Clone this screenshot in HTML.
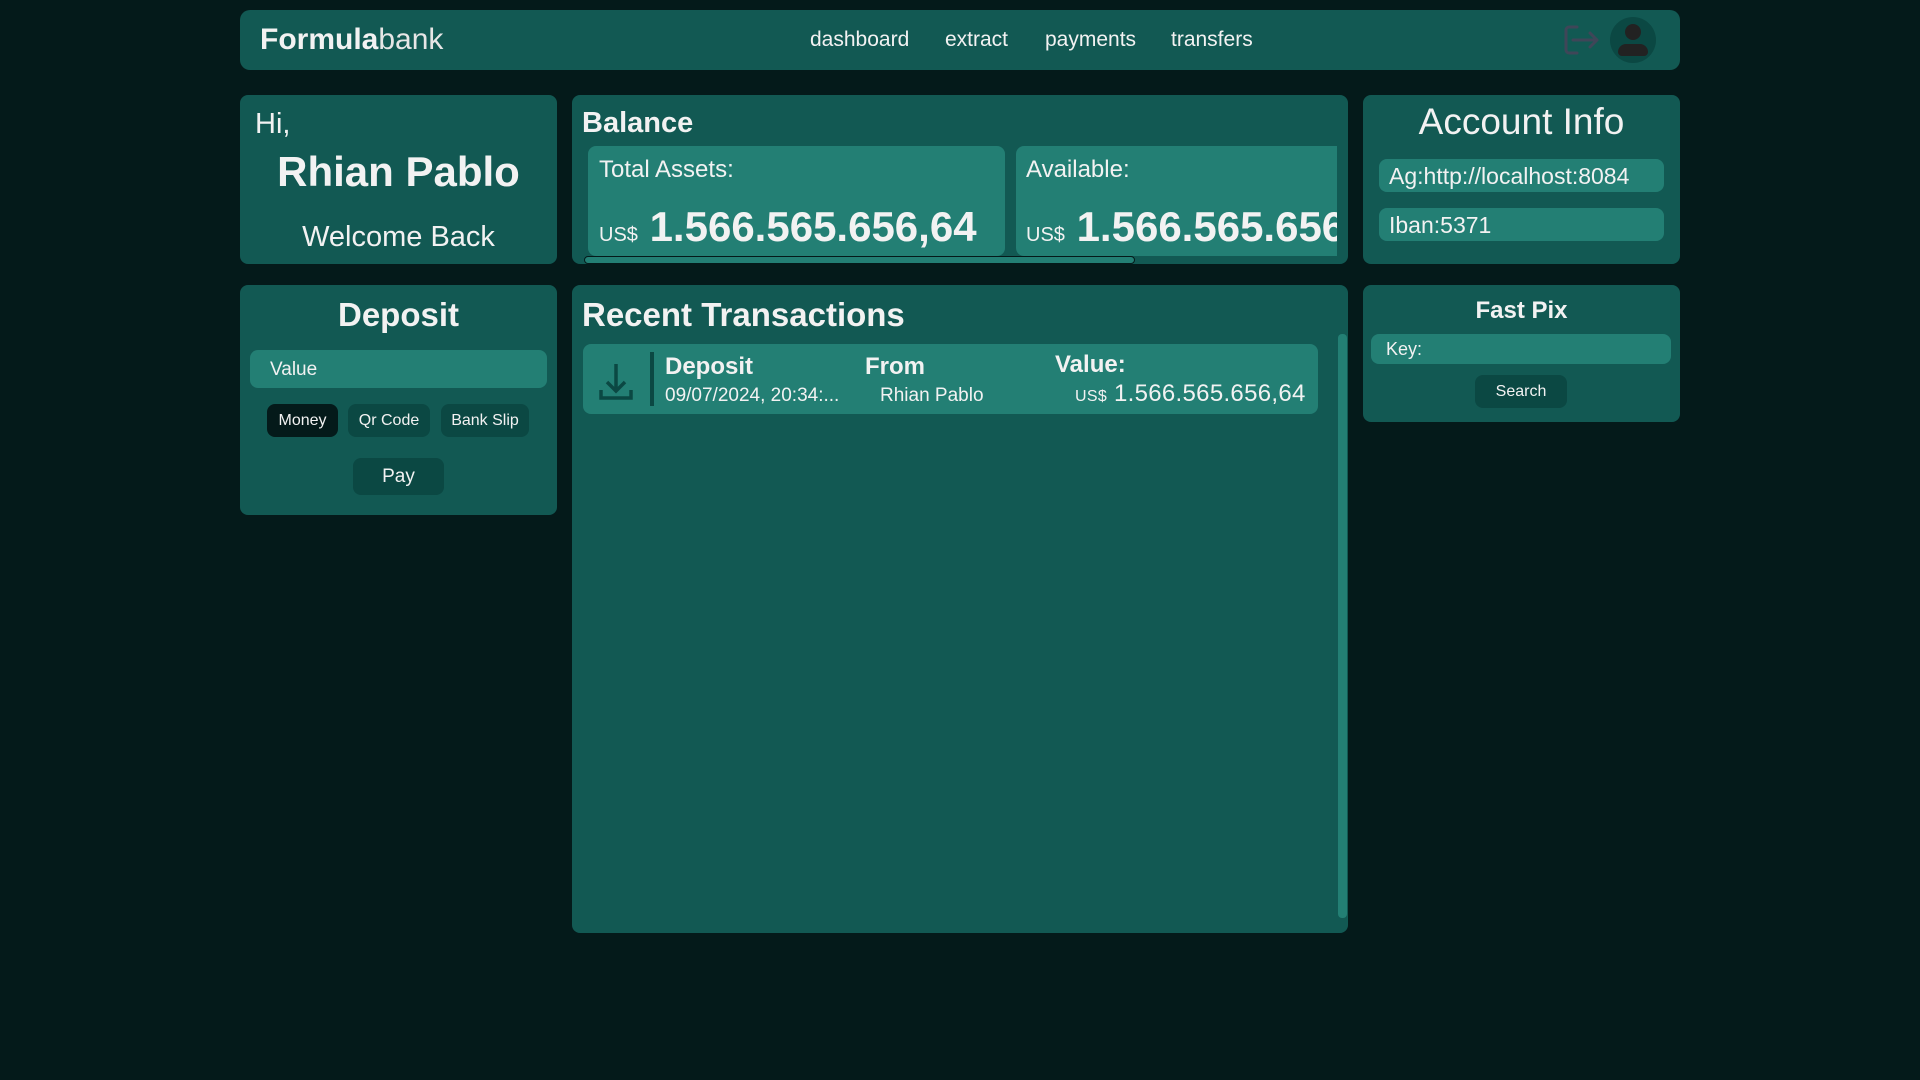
<!DOCTYPE html>
<html><head><meta charset="utf-8"><style>
*{box-sizing:border-box;margin:0;padding:0}
body{width:1920px;height:1080px;background:#041a1a;font-family:"Liberation Sans",sans-serif;color:#f2f2f2;position:relative;overflow:hidden}
.a{position:absolute}
.card{position:absolute;background:#125953;border-radius:8px}
.lt{position:absolute;background:#237f74;border-radius:8px}
.dk{position:absolute;background:#0b4843;border-radius:8px;display:flex;align-items:center;justify-content:center;font-size:16px}
</style></head><body>
<div class="card" style="left:240px;top:10px;width:1440px;height:60px;border-radius:10px"></div>
<div class="a" style="left:260px;top:23px;font-size:30px;"><b>Formula</b><span style="font-weight:normal;color:#e6e6e6">bank</span></div>
<div class="a" style="left:810px;top:28px;font-size:21px;">dashboard</div>
<div class="a" style="left:945px;top:28px;font-size:21px;">extract</div>
<div class="a" style="left:1045px;top:28px;font-size:21px;">payments</div>
<div class="a" style="left:1171px;top:28px;font-size:21px;">transfers</div>
<svg class="a" style="left:1563px;top:24px" width="38" height="32" viewBox="0 0 38 32"><path d="M14 3H6a3 3 0 0 0-3 3v20a3 3 0 0 0 3 3h8M10 16h24M27 9l7 7-7 7" fill="none" stroke="#3f4658" stroke-width="3" stroke-linecap="round" stroke-linejoin="round"/></svg>
<svg class="a" style="left:1610px;top:17px" width="46" height="46" viewBox="0 0 46 46"><circle cx="23" cy="23" r="23" fill="#0b4843"/><circle cx="23" cy="15" r="8" fill="#222"/><path d="M8 35a8 8 0 0 1 8-8h14a8 8 0 0 1 8 8 4 4 0 0 1-4 4H12a4 4 0 0 1-4-4z" fill="#222"/></svg>

<div class="card" style="left:240px;top:95px;width:317px;height:169px"></div>
<div class="a" style="left:255px;top:108px;font-size:29px">Hi,</div>
<div class="a" style="left:240px;width:317px;text-align:center;top:148px;font-size:42px;font-weight:bold">Rhian Pablo</div>
<div class="a" style="left:240px;width:317px;text-align:center;top:221px;font-size:29px">Welcome Back</div>

<div class="card" style="left:572px;top:95px;width:776px;height:169px"></div>
<div class="a" style="left:582px;top:107px;font-size:29px;font-weight:bold">Balance</div>
<div class="a" style="left:588px;top:146px;width:749px;height:110px;overflow:hidden">
 <div class="lt" style="left:0;top:0;width:417px;height:110px"></div>
 <div class="a" style="left:11px;top:10px;font-size:24px">Total Assets:</div>
 <div class="a" style="left:11px;top:57px;font-size:42px;font-weight:bold;white-space:nowrap"><span style="font-size:20px;font-weight:normal">US$</span> 1.566.565.656,64</div>
 <div class="lt" style="left:428px;top:0;width:340px;height:110px;border-radius:8px 0 0 8px"></div>
 <div class="a" style="left:438px;top:10px;font-size:24px">Available:</div>
 <div class="a" style="left:438px;top:57px;font-size:42px;font-weight:bold;white-space:nowrap"><span style="font-size:20px;font-weight:normal">US$</span> 1.566.565.656,64</div>
</div>
<div class="a" style="left:584px;top:256px;width:551px;height:8px;background:#237f74;border:1px solid #041a1a;border-radius:4px"></div>

<div class="card" style="left:1363px;top:95px;width:317px;height:169px"></div>
<div class="a" style="left:1363px;width:317px;text-align:center;top:101px;font-size:37px">Account Info</div>
<div class="lt" style="left:1379px;top:159px;width:285px;height:33px"></div>
<div class="a" style="left:1389px;top:163px;font-size:23px">Ag:http://localhost:8084</div>
<div class="lt" style="left:1379px;top:208px;width:285px;height:33px"></div>
<div class="a" style="left:1389px;top:212px;font-size:23px">Iban:5371</div>

<div class="card" style="left:240px;top:285px;width:317px;height:230px"></div>
<div class="a" style="left:240px;width:317px;text-align:center;top:296px;font-size:33px;font-weight:bold">Deposit</div>
<div class="lt" style="left:250px;top:350px;width:297px;height:38px"></div>
<div class="a" style="left:270px;top:359px;font-size:19px">Value</div>
<div class="dk" style="left:267px;top:404px;width:71px;height:33px;background:#041a1a">Money</div>
<div class="dk" style="left:348px;top:404px;width:82px;height:33px">Qr Code</div>
<div class="dk" style="left:441px;top:404px;width:88px;height:33px">Bank Slip</div>
<div class="dk" style="left:353px;top:458px;width:91px;height:37px;font-size:19px">Pay</div>

<div class="card" style="left:572px;top:285px;width:776px;height:648px"></div>
<div class="a" style="left:582px;top:296px;font-size:33px;font-weight:bold">Recent Transactions</div>
<div class="a" style="left:1338px;top:334px;width:9px;height:584px;background:#237f74;border-radius:4px"></div>
<div class="lt" style="left:583px;top:344px;width:735px;height:70px"></div>
<svg class="a" style="left:596px;top:360px" width="40" height="42" viewBox="0 0 40 42"><path d="M20 4v26M11 22l9 9 9-9M5 30v8h30v-8" fill="none" stroke="#0b4843" stroke-width="3.5"/></svg>
<div class="a" style="left:650px;top:352px;width:4px;height:54px;background:#0b4843"></div>
<div class="a" style="left:665px;top:353px;font-size:24px;font-weight:bold">Deposit</div>
<div class="a" style="left:665px;top:385px;font-size:19px">09/07/2024, 20:34:...</div>
<div class="a" style="left:865px;top:353px;font-size:24px;font-weight:bold">From</div>
<div class="a" style="left:880px;top:385px;font-size:19px">Rhian Pablo</div>
<div class="a" style="left:1055px;top:351px;font-size:24px;font-weight:bold">Value:</div>
<div class="a" style="left:1075px;top:380px;font-size:24px;letter-spacing:0.3px"><span style="font-size:16px">US$</span> 1.566.565.656,64</div>

<div class="card" style="left:1363px;top:285px;width:317px;height:137px"></div>
<div class="a" style="left:1363px;width:317px;text-align:center;top:297px;font-size:24px;font-weight:bold">Fast Pix</div>
<div class="lt" style="left:1371px;top:334px;width:300px;height:30px"></div>
<div class="a" style="left:1386px;top:339px;font-size:18px">Key:</div>
<div class="dk" style="left:1475px;top:375px;width:92px;height:33px">Search</div>
</body></html>
